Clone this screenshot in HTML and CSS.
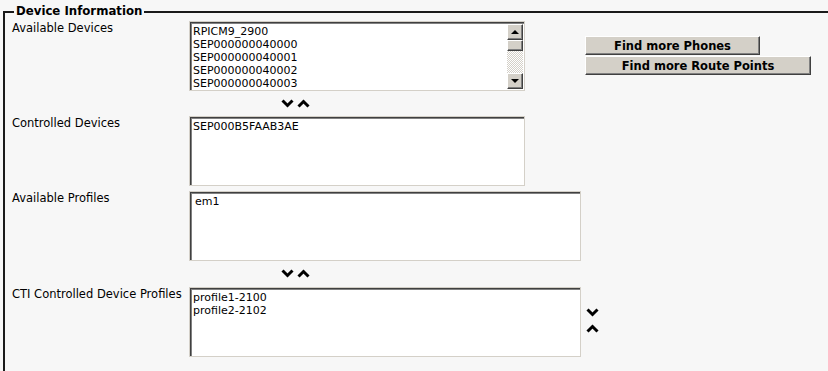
FILE: index.html
```html
<!DOCTYPE html>
<html lang="en">
<head>
  <meta charset="UTF-8">
  <title>Device Information</title>
  <link rel="stylesheet" href="styles.css">
</head>
<body>

  <fieldset class="device-info">
    <legend>Device Information</legend>

    <!-- Available Devices -->
    <div class="row">
      <div class="label">Available Devices</div>
      <div class="listbox box-short has-scroll">
        <div class="items">
          <div>RPICM9_2900</div>
          <div>SEP000000040000</div>
          <div>SEP000000040001</div>
          <div>SEP000000040002</div>
          <div>SEP000000040003</div>
        </div>
        <div class="scrollbar">
          <div class="sb-btn"><span class="tri-up"></span></div>
          <div class="sb-thumb"></div>
          <div class="sb-track"></div>
          <div class="sb-btn"><span class="tri-down"></span></div>
        </div>
      </div>
      <div class="find-buttons">
        <button class="btn btn-phones">Find more Phones</button>
        <button class="btn btn-routes">Find more Route Points</button>
      </div>
    </div>

    <div class="move-row">
      <svg class="chev" width="13" height="9" viewBox="0 0 13 9"><polyline points="1.5,1.5 6.5,6.5 11.5,1.5"/></svg>
      <svg class="chev" width="13" height="9" viewBox="0 0 13 9"><polyline points="1.5,7.5 6.5,2.5 11.5,7.5"/></svg>
    </div>

    <!-- Controlled Devices -->
    <div class="row">
      <div class="label">Controlled Devices</div>
      <div class="listbox box-short">
        <div class="items">
          <div>SEP000B5FAAB3AE</div>
        </div>
      </div>
    </div>

    <!-- Available Profiles -->
    <div class="row row-gap">
      <div class="label">Available Profiles</div>
      <div class="listbox box-wide">
        <div class="items items-pad">
          <div>em1</div>
        </div>
      </div>
    </div>

    <div class="move-row move-row-2">
      <svg class="chev" width="13" height="9" viewBox="0 0 13 9"><polyline points="1.5,1.5 6.5,6.5 11.5,1.5"/></svg>
      <svg class="chev" width="13" height="9" viewBox="0 0 13 9"><polyline points="1.5,7.5 6.5,2.5 11.5,7.5"/></svg>
    </div>

    <!-- CTI Controlled Device Profiles -->
    <div class="row">
      <div class="label">CTI Controlled Device Profiles</div>
      <div class="listbox box-wide">
        <div class="items">
          <div>profile1-2100</div>
          <div>profile2-2102</div>
        </div>
      </div>
      <div class="order-buttons">
        <svg class="chev" width="13" height="9" viewBox="0 0 13 9"><polyline points="1.5,1.5 6.5,6.5 11.5,1.5"/></svg>
        <svg class="chev" width="13" height="9" viewBox="0 0 13 9"><polyline points="1.5,7.5 6.5,2.5 11.5,7.5"/></svg>
      </div>
    </div>
  </fieldset>

</body>
</html>
```

FILE: styles.css
```css
body {
  margin: 0;
  padding: 0;
  background: #f7f7f7;
  color: #000;
  font-family: "DejaVu Sans", Verdana, sans-serif;
  font-size: 11px;
  line-height: 13px;
  overflow: hidden;
}

/* Fieldset frame */
.device-info {
  margin: 5px 0 0 3px;
  padding: 3px 0 40px 7px;
  border: 2px solid #1a1a1a;
  border-right: none;
  min-width: 0;
}

.device-info legend {
  font-weight: bold;
  font-size: 11.75px;
  padding: 0 2px;
  margin-left: 2px;
}

/* Rows */
.row {
  display: flex;
  align-items: flex-start;
}

.row-gap {
  margin-top: 5px;
}

.label {
  width: 177px;
  flex-shrink: 0;
  padding-top: 1px;
  font-size: 11.5px;
}

/* List boxes */
.listbox {
  display: flex;
  box-sizing: border-box;
  height: 70px;
  background: #fff;
  border: 1px solid #d4d0c8;
  box-shadow: inset 1px 1px 0 #404040, inset 2px 2px 0 #808080;
}

.box-short {
  width: 336px;
}

.box-wide {
  width: 392px;
}

.items {
  flex: 1;
  padding: 3px 0 0 3px;
  white-space: nowrap;
}

.items-pad {
  padding-left: 5px;
}

/* Classic scroll bar */
.scrollbar {
  width: 16px;
  margin: 2px 1px 1px 0;
  display: flex;
  flex-direction: column;
}

.sb-btn,
.sb-thumb {
  box-sizing: border-box;
  height: 16px;
  background: #d4d0c8;
  border: 1px solid;
  border-color: #fff #404040 #404040 #fff;
  box-shadow: inset -1px -1px 0 #808080;
  display: flex;
  align-items: center;
  justify-content: center;
}

.sb-thumb {
  height: 11px;
}

.sb-track {
  flex: 1;
  background: repeating-conic-gradient(#d4d0c8 0 25%, #fff 0 50%) 0 0 / 2px 2px;
}

.tri-up,
.tri-down {
  width: 0;
  height: 0;
  border-left: 4px solid transparent;
  border-right: 4px solid transparent;
}

.tri-up {
  border-bottom: 4px solid #000;
}

.tri-down {
  border-top: 4px solid #000;
}

/* Find buttons */
.find-buttons {
  display: flex;
  flex-direction: column;
  gap: 1px;
  margin: 15px 0 0 60px;
}

.btn {
  box-sizing: border-box;
  height: 19px;
  padding: 0;
  font-family: "DejaVu Sans", Verdana, sans-serif;
  font-size: 11.5px;
  font-weight: bold;
  color: #000;
  background: #d4d0c8;
  border: 1px solid;
  border-color: #fff #404040 #404040 #fff;
  box-shadow: inset -1px -1px 0 #808080;
}

.btn-phones {
  width: 175px;
}

.btn-routes {
  width: 226px;
}

/* Move arrows */
.chev polyline {
  fill: none;
  stroke: #000;
  stroke-width: 3;
}

.move-row {
  display: flex;
  gap: 3px;
  padding: 8px 0 0 269px;
  height: 17px;
}

.move-row-2 {
  height: 18px;
}

.order-buttons {
  display: flex;
  flex-direction: column;
  gap: 7px;
  margin: 21px 0 0 5px;
}
```
